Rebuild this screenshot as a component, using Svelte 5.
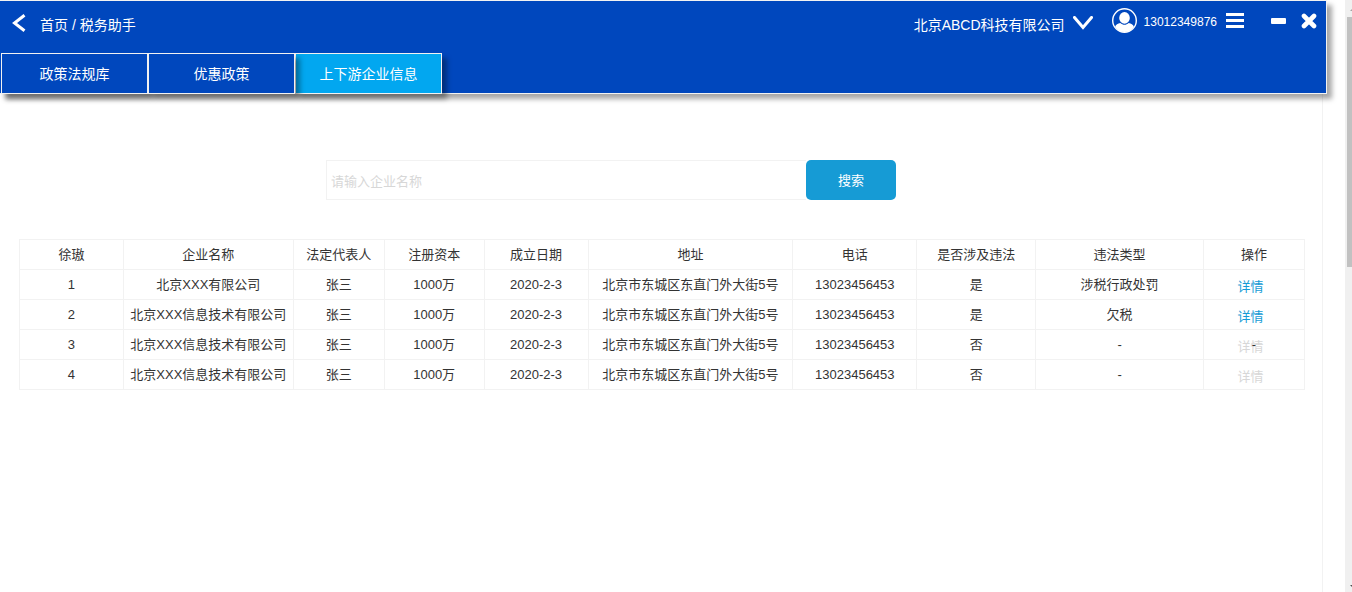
<script lang="ts">
  const tabs = ['政策法规库', '优惠政策', '上下游企业信息'];
  let active = $state(2);
  let query = $state('');

  const columns = [
    { title: '徐璈', width: 104 },
    { title: '企业名称', width: 170 },
    { title: '法定代表人', width: 91 },
    { title: '注册资本', width: 100 },
    { title: '成立日期', width: 104 },
    { title: '地址', width: 205 },
    { title: '电话', width: 124 },
    { title: '是否涉及违法', width: 119 },
    { title: '违法类型', width: 168 },
    { title: '操作', width: 101 },
  ];
  const total = columns.reduce((sum, c) => sum + c.width, 0);

  const address = '北京市东城区东直门外大街5号';
  const rows = [
    { cells: ['1', '北京XXX有限公司', '张三', '1000万', '2020-2-3', address, '13023456453', '是', '涉税行政处罚'], enabled: true, mark: '' },
    { cells: ['2', '北京XXX信息技术有限公司', '张三', '1000万', '2020-2-3', address, '13023456453', '是', '欠税'], enabled: true, mark: '' },
    { cells: ['3', '北京XXX信息技术有限公司', '张三', '1000万', '2020-2-3', address, '13023456453', '否', '-'], enabled: false, mark: '-' },
    { cells: ['4', '北京XXX信息技术有限公司', '张三', '1000万', '2020-2-3', address, '13023456453', '否', '-'], enabled: false, mark: '' },
  ];
</script>

<div class="page">
  <div class="main">
    <header>
      <div class="bar">
        <div class="crumbs">
          <button class="icon" aria-label="返回">
            <svg width="14" height="18" viewBox="0 0 14 18"><path d="M12.5 1.2 2.5 9l10 7.8" fill="none" stroke="#fff" stroke-width="3" /></svg>
          </button>
          <nav><a href="#home">首页</a> / <a href="#tax">税务助手</a></nav>
        </div>
        <button class="company">
          <span>北京ABCD科技有限公司</span>
          <svg width="20" height="14" viewBox="0 0 20 14"><path d="m1.5 1.5 8.500 10 8.500-10" fill="none" stroke="#fff" stroke-width="3" stroke-linecap="round" /></svg>
        </button>
        <div class="account">
          <svg width="25" height="25" viewBox="0 0 25 25">
            <circle cx="12.5" cy="12.5" r="11.8" fill="none" stroke="#fff" stroke-width="1.4" />
            <ellipse cx="12.5" cy="9.900" rx="5.300" ry="5.800" fill="#fff" />
            <path d="M8.300 15c2.600 2.400 5.800 2.400 8.400 0 2.500.4 4.400 1.700 5.200 3.700A11.400 11.400 0 0 1 12.500 24a11.400 11.400 0 0 1-9.400-5.300c.8-2 2.700-3.300 5.200-3.700z" fill="#fff" />
          </svg>
          <span class="phone">13012349876</span>
          <button class="icon" aria-label="菜单">
            <svg width="18" height="16" viewBox="0 0 18 16"><path d="M0 0h18v3H0zM0 6h18v3H0zM0 12h18v3H0z" fill="#fff" /></svg>
          </button>
        </div>
        <div class="window">
          <button class="icon" aria-label="最小化">
            <svg width="16" height="16" viewBox="0 0 16 16"><rect y="5" width="15" height="6" rx="1" fill="#fff" /></svg>
          </button>
          <button class="icon" aria-label="关闭">
            <svg width="16" height="16" viewBox="0 0 16 16"><path d="m3 3 10 10M13 3 3 13" stroke="#fff" stroke-width="4.600" stroke-linecap="round" /></svg>
          </button>
        </div>
      </div>
      <div class="tabs">
        {#each tabs as tab, i}
          <button class="tab" class:active={active === i} onclick={() => (active = i)}>{tab}</button>
        {/each}
      </div>
    </header>

    <main>
      <form onsubmit={(e) => e.preventDefault()}>
        <input type="text" placeholder="请输入企业名称" aria-label="企业名称" bind:value={query} />
        <button type="submit">搜索</button>
      </form>

      <table>
        <colgroup>
          {#each columns as c}
            <col style="width: {(c.width / total) * 100}%" />
          {/each}
        </colgroup>
        <thead>
          <tr>
            {#each columns as c}
              <th scope="col">{c.title}</th>
            {/each}
          </tr>
        </thead>
        <tbody>
          {#each rows as row}
            <tr>
              {#each row.cells as cell}
                <td>{cell}</td>
              {/each}
              <td class="action">
                <button class="detail" disabled={!row.enabled}>详情</button>
                {#if row.mark}<span class="mark">{row.mark}</span>{/if}
              </td>
            </tr>
          {/each}
        </tbody>
      </table>
    </main>
  </div>

  <div class="scroll" aria-hidden="true">
    <svg width="2" height="17" viewBox="0 0 2 17"><path d="M0 11 2 9v2z" fill="#a3a3a3" /></svg>
    <div class="thumb"></div>
    <svg width="2" height="10" viewBox="0 0 2 10"><path d="M0 3h2v2z" fill="#505050" /></svg>
  </div>
</div>

<style>
  :global(body) {
    margin: 0;
    background: #fff;
  }

  .page {
    display: flex;
    min-height: 100vh;
    color: #333;
    font-family: "Liberation Sans", "Noto Sans CJK SC", sans-serif;
    font-size: 13px;
    line-height: 20px;
  }

  button,
  input {
    margin: 0;
    padding: 0;
    border: 0;
    background: none;
    color: inherit;
    font: inherit;
  }

  button:enabled {
    cursor: pointer;
  }

  svg {
    display: block;
    flex: none;
  }

  .main {
    flex: 1;
    min-width: 0;
    display: flex;
    flex-direction: column;
  }

  header {
    position: relative;
    z-index: 1;
    margin-right: 18px;
    border: 1px solid #f2f2f2;
    border-left: 0;
    background: #0047bd;
    box-shadow: 5px 5px 5px rgba(0, 0, 0, 0.35);
    color: #fff;
    font-size: 14px;
  }

  .bar {
    display: flex;
    align-items: flex-start;
    height: 52px;
    padding: 0 9px 0 12px;
  }

  .crumbs {
    display: flex;
    align-items: center;
    gap: 14px;
    height: 44px;
    margin-right: auto;
  }

  .crumbs nav {
    padding-top: 4px;
  }

  .crumbs a {
    color: inherit;
    text-decoration: none;
  }

  .company {
    display: flex;
    align-items: center;
    gap: 8px;
    height: 44px;
    margin-right: 19px;
  }

  .company span {
    padding-top: 4px;
  }

  .account {
    display: flex;
    align-items: center;
    gap: 7px;
    height: 39px;
    margin-right: 27px;
  }

  .account .icon {
    margin-left: 2px;
  }

  .phone {
    padding-top: 2px;
    font-size: 12px;
  }

  .window {
    display: flex;
    align-items: center;
    gap: 14px;
    height: 39px;
  }

  .tabs {
    display: flex;
    padding-left: 1px;
    margin-bottom: -1px;
  }

  .tab {
    position: relative;
    z-index: 1;
    width: 147px;
    height: 41px;
    border: 1px solid #f2f2f2;
    background: #0047bd;
    box-shadow: 5px 5px 5px rgba(0, 0, 0, 0.35);
  }

  .tab.active {
    z-index: 0;
    background: #02a7f0;
  }

  main {
    flex: 1;
    margin-right: 22px;
    padding: 66px 17px 0 19px;
    border-right: 1px solid #f2f2f2;
  }

  form {
    display: flex;
    width: 570px;
    margin: 0 0 39px 307px;
  }

  input {
    flex: 1;
    box-sizing: border-box;
    height: 40px;
    padding: 2px 4px 0;
    border: 1px solid #f2f2f2;
    border-right: 0;
  }

  input::placeholder {
    color: #d7d7d7;
    opacity: 1;
  }

  form button {
    width: 90px;
    height: 40px;
    padding-top: 2px;
    border-radius: 5px;
    background: #169bd5;
    color: #fff;
  }

  table {
    width: 100%;
    table-layout: fixed;
    border-collapse: collapse;
  }

  th,
  td {
    box-sizing: border-box;
    height: 30px;
    padding: 1px 0 0;
    border: 1px solid #f2f2f2;
    font-weight: normal;
    text-align: center;
    white-space: nowrap;
  }

  .action {
    position: relative;
    padding: 4px 7px 0 0;
  }

  .detail {
    display: inline-block;
    height: 20px;
    color: #169bd5;
    vertical-align: top;
  }

  .detail:disabled {
    color: #d7d7d7;
  }

  .mark {
    position: absolute;
    inset: 5px 0 auto;
    pointer-events: none;
  }

  .scroll {
    display: flex;
    flex-direction: column;
    align-items: flex-end;
    width: 7px;
    background: #f0f0f0;
  }

  .thumb {
    width: 5px;
    height: 250px;
    margin-bottom: auto;
    background: #c1c1c1;
  }
</style>
